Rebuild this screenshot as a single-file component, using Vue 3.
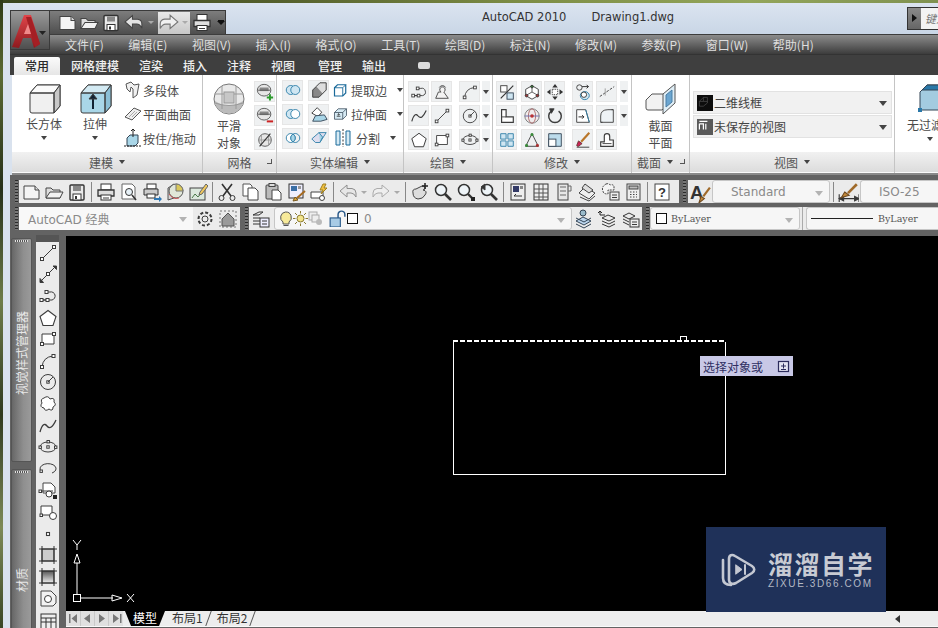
<template>
  <div class="app">
    <div class="win">
      <!-- title bar -->
      <div class="titlebar">
        <div class="appbtn">
          <svg width="40" height="40" viewBox="0 0 40 40">
            <defs>
              <linearGradient id="appbg" x1="0" y1="0" x2="0" y2="1">
                <stop offset="0" stop-color="#9c9c9c" />
                <stop offset="1" stop-color="#4c4c4c" />
              </linearGradient>
              <linearGradient id="appred" x1="0" y1="0" x2="0" y2="1">
                <stop offset="0" stop-color="#e0454a" />
                <stop offset="1" stop-color="#8e1a1e" />
              </linearGradient>
            </defs>
            <rect width="40" height="40" fill="url(#appbg)" />
            <path d="M2 37 L14 5 H21 L30 34 L24 38 L21 28 H13 L9 38Z" fill="url(#appred)" stroke="none" />
            <path d="M16 7 H21 L30 34 L25 37Z" fill="#a51f24" stroke="none" />
            <path d="M14 24 H21 L18 14Z" fill="#f08a8a" stroke="none" />
            <path d="M29 21 H36 L32.5 25Z" fill="#222" stroke="none" />
          </svg>
        </div>
        <div class="qat">
          <Ico name="new" :s="21" /><Ico name="open" :s="21" /><Ico name="save" :s="21" /><Ico name="undo" :s="22" />
          <span class="qdrop"></span>
          <span class="qredo"><Ico name="redo" :s="22" /><span class="qdrop"></span></span>
          <Ico name="print" :s="21" />
          <span class="qmore"></span>
        </div>
        <div class="wintitle"><span>AutoCAD 2010</span><span>Drawing1.dwg</span></div>
        <div class="search"><span class="searcharrow"></span><span class="searchtxt">键入</span></div>
      </div>

      <div class="menubar">
        <span v-for="m in menus" :key="m">{{ m }}</span>
      </div>

      <div class="tabs">
        <span v-for="(t, i) in tabs" :key="t" class="tab" :class="{ on: i === 0 }">{{ t }}</span>
        <span class="tabtoggle"></span>
      </div>

      <!-- ribbon -->
      <div class="ribbon">
        <section class="panel" style="width: 191px">
          <div class="body model">
            <div class="big" style="width: 64px">
              <Ico name="box" :s="34" />
              <span>长方体</span><i class="ar"></i>
            </div>
            <div class="big" style="width: 38px">
              <Ico name="extrude" :s="34" />
              <span>拉伸</span><i class="ar"></i>
            </div>
            <div class="smalls">
              <div v-for="r in modelRows" :key="r[1]" class="srow"><Ico :name="r[0]" :s="20" /><span>{{ r[1] }}</span></div>
            </div>
          </div>
          <div class="ptitle">建模<i class="ar"></i></div>
        </section>

        <section class="panel" style="width: 74px">
          <div class="body mesh">
            <div class="big" style="width: 46px">
              <Ico name="sphere" :s="34" />
              <span class="lbl2">平滑<br />对象</span>
            </div>
            <div class="col">
              <span class="cell"><Ico name="meshadd" /></span>
              <span class="cell"><Ico name="meshsub" /></span>
              <span class="cell"><Ico name="meshno" /></span>
            </div>
          </div>
          <div class="ptitle">网格<em class="corner"></em></div>
        </section>

        <section class="panel" style="width: 127px">
          <div class="body solid">
            <div v-for="r in solidRows" :key="r[3]" class="srow">
              <span class="cell"><Ico :name="r[0]" /></span>
              <span class="cell second"><Ico :name="r[1]" /></span>
              <Ico :name="r[2]" :s="20" />
              <span class="stxt">{{ r[3] }}</span><i class="ar"></i>
            </div>
          </div>
          <div class="ptitle">实体编辑<i class="ar"></i></div>
        </section>

        <section class="panel" style="width: 89px">
          <div class="body gridp draw">
            <template v-for="n in drawCells" :key="n">
              <span v-if="n === 'd'" class="dropcell"><i class="ar"></i></span>
              <span v-else class="cell"><Ico :name="n" /></span>
            </template>
          </div>
          <div class="ptitle">绘图<i class="ar"></i></div>
        </section>

        <section class="panel" style="width: 139px">
          <div class="body gridp modify">
            <template v-for="(n, i) in modifyCells" :key="i">
              <span v-if="n === 'd'" class="dropcell"><i class="ar"></i></span>
              <span v-else-if="n === ''"></span>
              <span v-else class="cell"><Ico :name="n" /></span>
            </template>
          </div>
          <div class="ptitle">修改<i class="ar"></i></div>
        </section>

        <section class="panel" style="width: 58px">
          <div class="body sect">
            <Ico name="section" :s="34" />
            <span class="lbl2">截面<br />平面</span>
          </div>
          <div class="ptitle sectitle">截面<i class="ar"></i><em class="corner"></em></div>
        </section>

        <section class="panel" style="width: 205px">
          <div class="body viewp">
            <div class="vcombo"><b class="sw"><Ico name="wire" :s="16" /></b><span>二维线框</span><i class="ar big-ar"></i></div>
            <div class="vcombo"><b class="sw gray"><Ico name="views" :s="16" /></b><span>未保存的视图</span><i class="ar big-ar"></i></div>
          </div>
          <div class="ptitle">视图<i class="ar"></i></div>
        </section>

        <section class="panel lastp">
          <div class="body nofilter">
            <Ico name="nofilter" :s="34" />
            <span>无过滤器</span><i class="ar"></i>
          </div>
          <div class="ptitle"></div>
        </section>
      </div>

      <!-- toolbars -->
      <div class="toolrow">
        <span class="grip"></span>
        <div class="tb std">
          <template v-for="(n, i) in stdTools" :key="i">
            <span v-if="n === '|'" class="sep"></span>
            <span v-else-if="n === 'd'" class="tdrop"></span>
            <span v-else class="tbtn" :class="{ dim: n === 'undo' || n === 'redo' }"><Ico :name="n" :s="20" /></span>
          </template>
        </div>
        <span class="grip g2"></span>
        <div class="tb rest">
          <span class="tbtn wide"><Ico name="textstyle" :s="22" /></span>
          <div class="combo" style="width: 118px"><span class="ctext">Standard</span><i class="ar cgray"></i></div>
          <span class="sep"></span>
          <span class="tbtn wide"><Ico name="dimstyle" :s="22" /></span>
          <div class="combo grow"><span class="ctext">ISO-25</span></div>
        </div>
      </div>

      <div class="toolrow second">
        <span class="grip"></span>
        <div class="tb wsp">
          <div class="combo flat" style="width: 174px"><span class="ctext wsname">AutoCAD 经典</span><i class="ar cgray"></i></div>
          <span class="tbtn"><Ico name="gear" :s="20" /></span>
          <span class="tbtn"><Ico name="house" :s="20" /></span>
        </div>
        <span class="grip g3"></span>
        <div class="tb layers">
          <span class="tbtn"><Ico name="layerprops" :s="20" /></span>
          <div class="combo layercombo" style="width: 298px">
            <Ico name="bulb" :s="15" /><Ico name="sun" :s="15" /><Ico name="freeze" :s="15" />
            <Ico name="lock" :s="17" class="lockic" />
            <span class="colorsq"></span>
            <span class="ctext zero">0</span>
            <i class="ar cgray"></i>
          </div>
          <span class="tbtn"><Ico name="layera" :s="20" /></span>
          <span class="tbtn"><Ico name="layerb" :s="20" /></span>
          <span class="tbtn"><Ico name="layerc" :s="20" /></span>
        </div>
        <span class="grip g4"></span>
        <div class="tb props">
          <div class="combo" style="width: 150px"><span class="colorsq small"></span><span class="mono">ByLayer</span><i class="ar cgray"></i></div>
          <span class="twoline"></span>
          <div class="combo grow"><span class="ltline"></span><span class="mono">ByLayer</span></div>
        </div>
      </div>

      <!-- work area -->
      <div class="work">
        <div class="palettes">
          <div class="pal p1"><span>视觉样式管理器</span></div>
          <div class="pal p2"><span>材质</span></div>
        </div>
        <div class="vtools">
          <span class="vgrip"></span>
          <span v-for="n in drawTools" :key="n" class="vbtn"><Ico :name="n" :s="20" /></span>
        </div>
        <div class="stage">
          <div class="canvas">
            <div class="rect"></div>
            <div class="rectgrip"></div>
            <div class="tip">
              <span>选择对象或</span>
              <svg width="13" height="13" viewBox="0 0 13 13">
                <rect x="1.5" y="1.5" width="10" height="10" fill="#e4e4f2" stroke="#2c2c5c" stroke-width="1.2" />
                <path d="M4 6h5M6.500 3.500v5M4 9.500h5" stroke="#2c2c5c" fill="none" />
              </svg>
            </div>
            <svg class="ucs" width="70" height="70" viewBox="0 0 70 70">
              <g fill="none" stroke="#fff" stroke-width="1">
                <rect x="4.5" y="55.5" width="7" height="7" />
                <path d="M8 55V24M12 59H44" />
                <path d="M8 15 L5 24 H11Z M43 56 L53 59 L43 62Z" />
                <path d="M4 1 L8 6 L12 1 M8 6 V11" />
                <path d="M58 55 L65 63 M65 55 L58 63" />
              </g>
            </svg>
          </div>
          <div class="tabbar">
            <div class="navs">
              <svg width="56" height="15" viewBox="0 0 56 15" fill="#777">
                <path d="M3 3h1.500v9H3zM11 3v9L5.500 7.500zM24 3v9L18 7.500zM33 3v9l6-4.500zM47 3v9l6-4.500zM54 3h1.500v9H54z" />
                <path d="M14.500 0v15M28.500 0v15M42.500 0v15" stroke="#c9c9c9" />
              </svg>
            </div>
            <span class="ltab active">模型</span>
            <span class="ltab">布局1</span>
            <span class="ltab">布局2</span>
            <span class="scrollleft"></span>
          </div>
        </div>
      </div>
    </div>

    <!-- watermark sits on top of the drawing area -->
    <div class="mark">
      <svg width="38" height="38" viewBox="0 0 38 38" fill="none" stroke="#c4c8d2" stroke-width="2.6" stroke-linecap="round" stroke-linejoin="round">
        <path d="M3 9 V27 C3 32 6 34 11 34" />
        <path d="M9 8 C9 4 12 3 15 5 L32 15 C35 17 35 20 32 22 L16 32 C12 34 9 32 9 29 Z" />
        <path d="M16 14 L22 18.500 L16 23Z" fill="#c4c8d2" stroke-width="1" />
        <path d="M25 14 V23" stroke-width="2" />
      </svg>
      <div class="marktxt">
        <div class="m1">溜溜自学</div>
        <div class="m2">ZIXUE.3D66.COM</div>
      </div>
    </div>
  </div>
</template>

<script setup>
import { h } from "vue";

const menus = ["文件(F)", "编辑(E)", "视图(V)", "插入(I)", "格式(O)", "工具(T)", "绘图(D)", "标注(N)", "修改(M)", "参数(P)", "窗口(W)", "帮助(H)"];
const tabs = ["常用", "网格建模", "渲染", "插入", "注释", "视图", "管理", "输出"];

const modelRows = [
  ["polysolid", "多段体"],
  ["planesurf", "平面曲面"],
  ["presspull", "按住/拖动"],
];
const solidRows = [
  ["union", "shell", "extractedge", "提取边"],
  ["subtract", "imprint", "extrudeface", "拉伸面"],
  ["intersect", "eraser", "split", "分割"],
];
const drawCells = [
  "pline", "hatchp", "arc", "d",
  "spline", "line", "circle", "d",
  "polygon", "rectg", "ellipse", "d",
];
const modifyCells = [
  "scale", "rot3d", "move", "offset", "trim", "d",
  "stretchc", "orbit", "rotate", "stretch", "fillet", "d",
  "array", "align", "scalebox", "brush", "boundary", "",
];
const stdTools = [
  "new", "open", "save", "|", "print", "preview", "plot", "globe", "sheet", "|",
  "cut", "copy", "paste", "match", "blockedit", "|", "undo", "d", "redo", "d", "|",
  "pan", "zoom", "zoomw", "zoomp", "|", "propsp", "design", "tool", "sheets", "markup", "calc", "|", "help",
];
const drawTools = [
  "line", "xline", "pline", "polygon", "rectg", "arc", "circle", "cloud", "spline", "ellipse",
  "earc", "insert", "block", "point", "hatch", "gradient", "region", "table",
];

const box = (front, top, side) =>
  `<path d="M3 11 L10 3 H33 V24 L27 31 H5 Q3 31 3 29Z" fill="${front}"/><path d="M3 11 L10 3 H33 L27 11Z" fill="${top}"/><path d="M27 11 L33 3 V24 L27 31Z" fill="${side}"/><path d="M3 11 H27 V31"/>`;

const ICONS = {
  box: box("#f0f0f0", "#fbfbfb", "#c8c8c8"),
  extrude: box("#a9d6e8", "#d3eaf3", "#8cbfd6") + '<path d="M15 27 V15" stroke="#123" stroke-width="2"/><path d="M11 17 L15 12 L19 17Z" fill="#123"/>',
  sphere: '<circle cx="17" cy="17" r="15" fill="#e9e9e9" stroke="#777"/><path d="M3 19 Q17 28 31 19 V22 A15 15 0 0 1 3 22Z" fill="#bbb" stroke="none"/><path d="M3 12 H31 M10 4 V27 M24 4 V27 M3 21 Q17 26 31 21" stroke="#999"/><rect x="12" y="10" width="10" height="11" fill="#c7c7c7" stroke="#999"/>',
  section: '<path d="M2 18 L8 12 H22 V24 L18 28 H4 Q2 28 2 26Z" fill="#f2f2f2" stroke="#555"/><path d="M19 12 L31 2 V21 L19 32Z" fill="#dfeef6" stroke="#555"/><path d="M22 13 L28 8 V20 L22 25Z" fill="#6aa5d0" stroke="#4a7ea6"/>',
  nofilter: '<path d="M3 10 L10 3 H34 V28 H3Z" fill="#a3cbe0" stroke="#345"/><path d="M3 10 L10 3 H34 L32 8 H5Z" fill="#2a78a8" stroke="#345"/><rect x="1" y="26" width="4" height="4" fill="#2a78a8" stroke="none"/>',

  new: '<path d="M3 4 H14 L18 8 V17 H3Z" fill="#f4f4f4" stroke="#444"/><path d="M14 4 V8 H18" fill="#d9d9d9" stroke="#444"/>',
  open: '<path d="M2 6 H7 L9 8 H16 V16 H2Z" fill="#dedede" stroke="#444"/><path d="M2 16 L6 10 H19 L16 16Z" fill="#f2f2f2" stroke="#444"/>',
  save: '<rect x="3" y="3" width="14" height="15" rx="1" fill="#e9e9e9" stroke="#333" stroke-width="1.4"/><rect x="6" y="4" width="8" height="5" fill="#888" stroke="none"/><rect x="6" y="12" width="8" height="6" fill="#fff" stroke="#333"/><rect x="8" y="14" width="2" height="3" fill="#333" stroke="none"/>',
  undo: '<path d="M2 9 L9 3 V6.500 H14 Q18 7 18 11 V15 Q16 11 13 11 H9 V15Z" fill="#e2e2e2" stroke="#444"/>',
  redo: '<path d="M18 9 L11 3 V6.500 H6 Q2 7 2 11 V15 Q4 11 7 11 H11 V15Z" fill="#f1f1f1" stroke="#777"/>',
  print: '<rect x="5" y="2" width="10" height="6" fill="#fff" stroke="#333"/><path d="M2 8 H18 V14 H2Z" fill="#dedede" stroke="#333" stroke-width="1.3"/><rect x="5" y="13" width="10" height="5" fill="#fff" stroke="#333"/><path d="M7 16 H13" />',
  preview: '<path d="M3 2 H13 L16 5 V17 H3Z" fill="#fff" stroke="#666"/><circle cx="10" cy="10" r="3.5" fill="#e7f1f7" stroke="#333"/><path d="M13 13 L17 18" stroke="#333" stroke-width="1.6"/>',
  plot: '<rect x="5" y="2" width="9" height="5" fill="#fff" stroke="#333"/><path d="M2 7 H16 V13 H2Z" fill="#ccc" stroke="#333"/><rect x="5" y="12" width="8" height="4" fill="#fff" stroke="#333"/><path d="M12 16 H17 V14 L20 17 L17 20 V18 H12Z" fill="#2f78b5" stroke="none"/>',
  globe: '<path d="M3 6 L9 2 L9 16 L3 18Z" fill="#d5d5d5" stroke="#555"/><circle cx="11" cy="9" r="7" fill="#e0e6d8" stroke="#555"/><path d="M11 2 A7 7 0 0 1 18 9 H11Z" fill="#d9c85a" stroke="#777"/><path d="M4 12 Q8 18 14 16" fill="none" stroke="#c55"/>',
  sheet: '<rect x="2" y="6" width="15" height="12" fill="#dce9dd" stroke="#444"/><path d="M4 16 L7 12 L10 15 L14 10" stroke="#4a7a4a"/><path d="M12 10 L18 2 L20 4 L14 12 L11 13Z" fill="#f1c95c" stroke="#666"/>',
  cut: '<path d="M5 2 L14 14 M15 2 L6 14" stroke="#333" stroke-width="1.6"/><circle cx="4.5" cy="16" r="2.5"/><circle cx="15.5" cy="16" r="2.5"/>',
  copy: '<path d="M3 2 H10 L12 4 V14 H3Z" fill="#fff" stroke="#555"/><path d="M8 6 H15 L18 9 V18 H8Z" fill="#fff" stroke="#444"/>',
  paste: '<rect x="3" y="3" width="12" height="14" rx="1" fill="#bbb" stroke="#444"/><rect x="6" y="1.5" width="6" height="3" fill="#ddd" stroke="#444"/><path d="M9 8 H15 L18 11 V18 H9Z" fill="#fff" stroke="#444"/>',
  match: '<rect x="3" y="2" width="14" height="14" fill="#eef" stroke="#333"/><rect x="5" y="4" width="6" height="5" fill="#3a6ea5" stroke="none"/><rect x="12" y="4" width="3" height="3" fill="#999" stroke="none"/><path d="M19 9 L11 16" stroke="#a56a20" stroke-width="2"/><path d="M9 15 L12 18 L7 19Z" fill="#d8a23a" stroke="#7a5a20"/>',
  blockedit: '<path d="M2 10 H14 V16 H2Z" fill="#fff" stroke="#444"/><circle cx="13" cy="16" r="2.5" fill="#fff" stroke="#444"/><path d="M14 2 L11 8 H14 L12 12 L18 6 H15 L17 2Z" fill="#f0c040" stroke="#a08020"/>',
  pan: '<path d="M3 11 Q2 7 6 7 L12 4 Q16 4 15 7 L13 8 Q18 9 15 13 Q13 17 8 17 Q3 16 3 11Z" fill="#ddd" stroke="#444"/><path d="M15 1 V7 M12 4 H18" stroke="#222" stroke-width="1.5"/>',
  zoom: '<circle cx="8" cy="8" r="5.5" fill="#eef4f8" stroke="#333" stroke-width="1.5"/><path d="M12 12 L18 18" stroke="#333" stroke-width="2.6"/>',
  zoomw: '<circle cx="8" cy="8" r="5.5" fill="#eef4f8" stroke="#333" stroke-width="1.5"/><path d="M12 12 L16 16" stroke="#333" stroke-width="2.4"/><rect x="15" y="15" width="4" height="4" fill="#222" stroke="none"/>',
  zoomp: '<circle cx="8" cy="8" r="5.5" fill="#eef4f8" stroke="#333" stroke-width="1.5"/><path d="M12 12 L18 18" stroke="#333" stroke-width="2.6"/><path d="M2 5 L6 2 V8Z" fill="#333"/>',
  propsp: '<rect x="3" y="2" width="14" height="16" fill="#eee" stroke="#333"/><rect x="5" y="4" width="6" height="6" fill="#333a66" stroke="none"/><rect x="12" y="4" width="3" height="3" fill="#888" stroke="none"/><path d="M6 14 H14 M6 14 L8 12" stroke="#333"/>',
  design: '<rect x="3" y="2" width="14" height="16" fill="#eee" stroke="#333"/><path d="M3 7 H17 M3 11 H17 M3 15 H17 M8 2 V18 M12 2 V18" stroke="#555"/>',
  tool: '<rect x="4" y="2" width="10" height="16" fill="#e6e6e6" stroke="#444"/><path d="M14 4 H17 V9 H14 M6 5 H12 M6 9 H12 M6 13 H12" stroke="#666"/>',
  sheets: '<path d="M2 11 L8 5 L18 11 L12 17Z" fill="#eee" stroke="#444"/><path d="M8 2 L16 8 L12 11 L5 6Z" fill="#ddd" stroke="#444"/><path d="M3 15 L12 19 L18 14" stroke="#444"/>',
  markup: '<path d="M6 2 Q9 1 10 3 Q14 2 14 5 V8 H8 V12 Q3 12 3 9 Q1 5 6 2Z" fill="#f4f4f4" stroke="#444" stroke-dasharray="2 1"/><rect x="10" y="10" width="9" height="8" fill="#eee" stroke="#444"/><path d="M12 13 H17 M12 15.500 H17"/>',
  calc: '<rect x="4" y="2" width="13" height="16" fill="#eee" stroke="#444"/><rect x="6" y="4" width="9" height="3" fill="#bbb" stroke="#444"/><path d="M7 10 H14 M7 12.500 H14 M7 15 H14" stroke="#444" stroke-dasharray="1.5 1.5"/>',
  help: '<rect x="3" y="2" width="14" height="16" fill="#fff" stroke="#444"/><text x="10" y="15" font-size="13" font-weight="700" text-anchor="middle" font-family="Liberation Sans" fill="#333" stroke="none">?</text>',

  textstyle: '<text x="1" y="16" font-size="17" font-family="Liberation Sans" font-weight="700" fill="#333" stroke="none">A</text><path d="M19 6 L13 14" stroke="#a06a2a" stroke-width="2"/><path d="M11 14 L14 16 L9 20Z" fill="#c58a3a" stroke="#704a20"/>',
  dimstyle: '<path d="M2 12 V19 M20 12 V19 M2 16 H20" stroke="#333"/><path d="M2 16 L6 14 V18Z M20 16 L16 14 V18Z" fill="#333"/><path d="M18 3 L10 11" stroke="#a06a2a" stroke-width="2.4"/><path d="M7 10 L11 13 L4 15Z" fill="#c58a3a" stroke="#704a20"/>',
  gear: '<circle cx="10" cy="10" r="3" /><circle cx="10" cy="10" r="6.5" stroke-dasharray="3 2" stroke-width="2" />',
  house: '<path d="M2 2 H18 V18 H2Z" stroke-dasharray="2 2" stroke="#777"/><path d="M4 10 L10 4 L16 10 V17 H4Z" fill="#9a9a9a" stroke="#555"/>',
  layerprops: '<path d="M2 6 L8 3 H12 L8 6Z M2 9 H9 M2 12 H9 M2 15 H9" stroke="#333"/><rect x="9" y="9" width="9" height="9" fill="#eef" stroke="#333"/><path d="M11 12 H16 M11 15 H16" stroke="#333"/>',
  bulb: '<path d="M7.500 1 A5.500 5.500 0 0 1 11 11 V13 H5 V11 A5.500 5.500 0 0 1 7.500 1Z" fill="#f7ea9a" stroke="#555"/><path d="M5.500 14.500 H10.500" stroke="#555"/>',
  sun: '<circle cx="7.5" cy="7.5" r="3.5" fill="#f3e48a" stroke="#8a7a30"/><path d="M7.500 0 V2.500 M7.500 12.500 V15 M0 7.500 H2.500 M12.500 7.500 H15 M2 2 L4 4 M11 11 L13 13 M13 2 L11 4 M4 11 L2 13" stroke="#8a7a30"/>',
  freeze: '<rect x="1" y="1" width="8" height="8" fill="#eee" stroke="#aaa"/><rect x="4" y="4" width="7" height="7" fill="#eee" stroke="#aaa"/><circle cx="11" cy="11" r="3" fill="#bbb" stroke="none"/>',
  lock: '<rect x="1" y="7" width="9" height="8" fill="#a8cbe5" stroke="#2a5a8a"/><path d="M8 7 V4 A3 3 0 0 1 14 4 V6" stroke="#2a5a8a" stroke-width="1.3"/>',
  layera: '<path d="M2 12 L9 8 L17 12 L10 16Z" fill="#bcd6ee" stroke="#345"/><path d="M2 15 L10 19 L17 15 M2 9 L10 13 L17 9" stroke="#345"/><circle cx="9" cy="4" r="3" fill="#9bc" stroke="#345"/>',
  layerb: '<path d="M5 9 L11 6 L18 9 L12 12Z M5 12 L12 15 L18 12 M5 15 L12 18 L18 15" stroke="#333"/><path d="M3 6 V2 M1 4 L3 2 L5 4 M3 6 H8" stroke="#222"/>',
  layerc: '<path d="M3 7 L9 4 L15 7 L9 10Z M3 10 L9 13 M3 13 L9 16" stroke="#333"/><rect x="10" y="10" width="9" height="8" fill="#eee" stroke="#333"/><path d="M12 13 H17 M12 15.500 H17"/>',
  wire: '<path d="M3 8 L8 3 H13 V10 L8 14 H3Z M8 3 V8 H13 M3 8 H8" stroke="#555" stroke-width=".8"/>',
  views: '<path d="M3 3 H13 M3 6 H8 V13 M11 6 V13 M3 6 V13" stroke="#fff" stroke-width="1.5"/>',

  polysolid: '<path d="M3 4 L8 2 L11 5 L16 4 L14 15 L10 18 L10 9 L8 7 L7 12 L4 9Z" fill="#f0f0f0" stroke="#555"/>',
  planesurf: '<path d="M2 13 L11 4 L18 7 L9 16Z" fill="#eee" stroke="#555"/><path d="M6 13 L12 7 M9 13 L14 8" stroke="#aaa"/>',
  presspull: '<path d="M4 10 L7 7 H15 V15 L12 18 H4Z" fill="#a9d6e8" stroke="#345"/><path d="M10 9 V1 M8 3 L10 1 L12 3" stroke="#222"/><path d="M1 18 H18" stroke="#222" stroke-dasharray="2 1"/>',
  meshadd: '<ellipse cx="9" cy="8" rx="7.5" ry="6.5" fill="#e6e6e6" stroke="#555"/><rect x="4" y="5" width="10" height="4" fill="#888" stroke="none"/><path d="M2 8 H16" stroke="#555"/><path d="M12 16 H19 M15.500 12.500 V19.500" stroke="#2c9a2c" stroke-width="2.2"/>',
  meshsub: '<ellipse cx="9" cy="8" rx="7.5" ry="6.5" fill="#e6e6e6" stroke="#555"/><rect x="4" y="5" width="10" height="4" fill="#888" stroke="none"/><path d="M2 8 H16" stroke="#555"/><path d="M12 16 H19" stroke="#c22" stroke-width="2.2"/>',
  meshno: '<circle cx="10" cy="10" r="7" fill="#e6e6e6" stroke="#555"/><path d="M3 10 H17 M6 4 V16 M14 4 V16" stroke="#999"/><path d="M4 17 L16 3" stroke="#333" stroke-width="1.2"/>',
  union: '<circle cx="7.5" cy="10" r="5" fill="#cfe6f2" stroke="#2f7fa8"/><circle cx="12.5" cy="10" r="5" fill="#cfe6f2" stroke="#2f7fa8"/>',
  subtract: '<circle cx="7.5" cy="10" r="5" fill="#cfe6f2" stroke="#2f7fa8"/><circle cx="12.5" cy="10" r="5" fill="#fff" stroke="#2f7fa8"/>',
  intersect: '<circle cx="7.5" cy="10" r="5" fill="#fff" stroke="#2f7fa8"/><circle cx="12.5" cy="10" r="5" fill="none" stroke="#2f7fa8"/><path d="M10 5.700 A5 5 0 0 1 10 14.300 A5 5 0 0 1 10 5.700Z" fill="#a9d6e8" stroke="#2f7fa8"/>',
  shell: '<path d="M3 10 L7 6 H14 V14 L10 18 H3Z" fill="#888" stroke="#333"/><path d="M7 6 L11 2 H18 V10 L14 14" fill="#ddd" stroke="#333"/>',
  imprint: '<path d="M2 9 L8 3 L13 8 L9 13Z" fill="#fff" stroke="#333"/><path d="M3 18 L6 12 L16 11 L19 16 L12 18Z" fill="#a9d6e8" stroke="#345"/>',
  eraser: '<path d="M2 11 L10 4 H18 L11 15 H6Z" fill="#dde" stroke="#2f7fa8"/><path d="M10 4 L14 9 L11 15" fill="#a9d6e8" stroke="#2f7fa8"/>',
  extractedge: '<path d="M2 7 L6 3 H17 V14 L13 18 H2Z" fill="#fff" stroke="#1a6a9a" stroke-width="1.6"/><path d="M2 7 H13 V18 M13 7 L17 3" stroke="#1a6a9a" stroke-width="1.2"/>',
  extrudeface: '<path d="M2 8 L7 3 H18 V12 L13 17 H2Z" fill="#d6eaf4" stroke="#345"/><path d="M2 8 H13 V17 M13 8 L18 3" stroke="#345"/><path d="M5 13 H10 M7.500 10 V12 M6 11 L7.500 9.500 L9 11" stroke="#222"/>',
  split: '<path d="M3 3 H7 V17 H3Z M13 3 H17 V17 H13Z" fill="#d6eaf4" stroke="#1a6a9a"/><path d="M10 1 V19" stroke="#333" stroke-dasharray="2 1.5"/>',
  pline: '<path d="M3 14 H9 M3 14 H9 M10 14 H14 A4 4 0 0 0 12 6 H9" /><rect x="2" y="12.5" width="3" height="3" fill="#fff"/><rect x="8" y="12.5" width="3" height="3" fill="#fff"/><rect x="7" y="4.5" width="3" height="3" fill="#fff"/>',
  hatchp: '<path d="M3 17 L6 10 H9 A3 3 0 1 1 12 10 L17 17Z" fill="#f3f3f3" stroke="#444"/><path d="M7 5 A4 4 0 0 1 14 5" />',
  arc: '<path d="M4 16 Q5 6 15 5" /><rect x="2.5" y="14.5" width="3" height="3" fill="#fff"/><rect x="14" y="3.5" width="3" height="3" fill="#fff"/>',
  spline: '<path d="M2 16 Q5 5 9 10 T18 4" stroke-width="1.3"/>',
  line: '<path d="M4 16 L16 4" /><rect x="2.5" y="14.5" width="3" height="3" fill="#fff"/><rect x="14.5" y="2.5" width="3" height="3" fill="#fff"/>',
  xline: '<path d="M2 18 L18 2" /><rect x="8.5" y="8.5" width="3" height="3" fill="#fff"/><path d="M15 2 H18.500 V5.500Z M2 14.500 V18.500 H5.500Z" fill="#333"/>',
  circle: '<circle cx="10" cy="10" r="7.5"/><rect x="8.8" y="8.8" width="2.4" height="2.4" fill="#fff"/><path d="M10 10 L15 5" />',
  polygon: '<path d="M10 2.500 L18 8.500 L15 17.500 H5 L2 8.500Z" fill="#fff" stroke-width="1.1"/>',
  rectg: '<path d="M4 5 H16 V15 H4Z" fill="#fff"/><rect x="2.5" y="13.5" width="3" height="3" fill="#fff"/><rect x="14.5" y="3.5" width="3" height="3" fill="#fff"/>',
  ellipse: '<ellipse cx="10" cy="10" rx="8" ry="5"/><rect x="8.8" y="8.8" width="2.4" height="2.4" fill="#fff"/><rect x="9" y="3.5" width="2.4" height="2.4" fill="#fff"/><rect x="1" y="9" width="2.4" height="2.4" fill="#fff"/><rect x="16.5" y="9" width="2.4" height="2.4" fill="#fff"/>',
  earc: '<path d="M3 12 A8 5 0 1 1 14 14" /><rect x="2" y="11" width="2.4" height="2.4" fill="#fff"/>',
  cloud: '<path d="M6 4 Q10 1 12 5 Q17 3 16 8 Q19 11 15 13 Q15 18 11 15 Q7 18 6 14 Q1 13 4 9 Q2 5 6 4Z" fill="#fff"/>',
  insert: '<path d="M5 3 H13 L17 7 V13 H5Z" fill="#fff" stroke="#444"/><path d="M2 11 H15" /><rect x="1" y="10" width="2.5" height="2.5" fill="#fff"/><circle cx="11" cy="14" r="3" fill="#fff"/><rect x="15" y="15" width="4" height="4" fill="#222" stroke="none"/>',
  block: '<path d="M3 4 H14 V13 H3Z" fill="#fff"/><rect x="2" y="12" width="2.5" height="2.5" fill="#fff"/><circle cx="15" cy="14" r="3.5" fill="#fff"/>',
  point: '<rect x="8.5" y="8.5" width="3" height="3" fill="#fff" stroke-width="1.1"/>',
  hatch: '<rect x="4" y="4" width="12" height="12" fill="#ccc" stroke="#333"/><path d="M1 4 H19 M1 16 H19 M4 1 V19 M16 1 V19" stroke="#333"/>',
  gradient: '<defs><linearGradient id="gr" x1="0" y1="0" x2="0" y2="1"><stop offset="0" stop-color="#555"/><stop offset="1" stop-color="#eee"/></linearGradient></defs><rect x="4" y="4" width="12" height="12" fill="url(#gr)" stroke="#333"/><path d="M1 4 H19 M1 16 H19 M4 1 V19 M16 1 V19" stroke="#333"/>',
  region: '<path d="M3 3 H13 L18 8 V15 L15 18 H3Z" fill="#f2f2f2" stroke="#444"/><circle cx="10" cy="11" r="3.5" fill="#fff"/>',
  table: '<rect x="3" y="4" width="15" height="15" fill="#eee" stroke="#333"/><path d="M3 8 H18 M3 12 H18 M8 8 V19 M13 8 V19" stroke="#333"/>',
  scale: '<path d="M3 17 L17 3" stroke="#333" stroke-width="1.3"/><rect x="3" y="3" width="7" height="7" fill="#fff"/><rect x="10" y="11" width="7" height="7" fill="#cfe6f2" stroke="#345"/>',
  rot3d: '<path d="M10 3 L17 7 V14 L10 18 L3 14 V7Z" fill="#fff"/><path d="M10 10 V3 M10 10 L3 14 M10 10 L17 14" stroke="#555"/><circle cx="10" cy="4" r="1.5" fill="#3a7a3a"/><circle cx="4" cy="14" r="1.5" fill="#a33"/><circle cx="16" cy="14" r="1.5" fill="#a33"/>',
  move: '<path d="M10 1 L13 5 H7Z M10 19 L7 15 H13Z M1 10 L5 7 V13Z M19 10 L15 7 V13Z" fill="#333" stroke="none"/><rect x="7" y="7" width="6" height="6" fill="#fff" stroke-dasharray="1.5 1"/>',
  offset: '<circle cx="6" cy="5" r="3"/><path d="M9 4 H16 M14 2 L16 4 L14 6" stroke="#222"/><ellipse cx="12" cy="14" rx="5" ry="4.5" stroke="#2f7fa8" fill="#cfe6f2"/><ellipse cx="11" cy="13" rx="3" ry="3" fill="#fff" stroke="#333"/>',
  trim: '<path d="M2 15 L18 4" stroke-dasharray="3 1.5"/><path d="M8 6 V14" stroke="#999"/>',
  stretchc: '<path d="M4 3 H9 V11 H17 V17 H4Z" fill="#fff" stroke-width="1.3"/><path d="M4 11 H9" />',
  orbit: '<circle cx="10" cy="10" r="8" fill="#f0ecec" stroke="#777"/><ellipse cx="10" cy="10" rx="4" ry="8" stroke="#a66"/><path d="M2 10 H18" stroke="#66a"/><circle cx="10" cy="10" r="2" fill="#b33" stroke="none"/>',
  rotate: '<path d="M14 4.500 A7 7 0 1 1 6 4.500" stroke-width="1.6"/><path d="M4 2 L9 2 L6 7Z" fill="#333"/>',
  stretch: '<path d="M3 3 H13 L17 17 H3Z" fill="#fff"/><path d="M13 3 L17 17" stroke="#2f7fa8"/><path d="M5 11 H11 M9 9 L11 11 L9 13" stroke="#222"/>',
  fillet: '<path d="M3 17 V10 Q3 3 11 3 H17 V17Z" fill="#eef3f6"/><path d="M3 17 H5 M15 3 H17" />',
  array: '<path d="M3 3 H9 V9 H3Z M11 3 H17 V9 H11Z M3 11 H9 V17 H3Z M11 11 H17 V17 H11Z" fill="#cfe6f2" stroke="#2f7fa8"/>',
  align: '<path d="M10 3 L3 17 H17Z"/><circle cx="10" cy="4" r="1.7" fill="#3a8a3a" stroke="none"/><circle cx="4" cy="16" r="1.7" fill="#3a8a3a" stroke="none"/><circle cx="16" cy="16" r="1.7" fill="#a33" stroke="none"/>',
  scalebox: '<path d="M3 3 H17 V17 H3Z" fill="#bcdcec" stroke="#345"/><rect x="3" y="9" width="8" height="8" fill="#fff" stroke="#345"/>',
  brush: '<path d="M17 2 L8 12" stroke="#b9762a" stroke-width="2.4"/><path d="M5 11 L9 14 L5 17 Q3 17 3 16Z" fill="#c25" stroke="#633"/><path d="M3 18 H17" stroke="#333"/>',
  boundary: '<path d="M3 17 V12 H7 V6 Q7 3 10 3 Q13 3 13 6 V10 H17 V17Z" fill="#fff" stroke-width="1.3"/><path d="M5 14 H15" />',
};

const Ico = (props) =>
  h("svg", {
    class: "ico",
    width: props.s || 18,
    height: props.s || 18,
    viewBox: (props.s || 18) >= 30 ? "0 0 34 34" : ["bulb", "sun", "freeze", "lock"].includes(props.name) ? "0 0 15 15" : "0 0 20 20",
    fill: "none",
    stroke: "#3c3c3c",
    innerHTML: ICONS[props.name] || "",
  });
Ico.props = ["name", "s"];
</script>

<style scoped>
.app {
  position: relative;
  width: 938px;
  height: 628px;
  overflow: hidden;
  padding: 3px 0 0 3px;
  box-sizing: border-box;
  background: linear-gradient(90deg, #39451f 0, #55602c 30%, #7c8c44 55%, #93a55a 80%, #7f9150 100%);
  font-family: "Noto Sans CJK SC", "Liberation Sans", sans-serif;
  font-size: 12px;
  color: #4a4a4a;
}
.app::before {
  content: "";
  position: absolute;
  left: 0;
  top: 0;
  width: 3px;
  height: 628px;
  background: linear-gradient(180deg, #2e3a18, #5b6a34 12%, #26301a 30%, #6d7c4a 48%, #2f3a20 66%, #7d8a58 84%, #3a4626);
}
.win {
  height: 625px;
  padding-left: 7px;
  background: #d9e2ee;
  position: relative;
  display: flex;
  flex-direction: column;
}

.titlebar {
  height: 31px;
  flex: none;
  display: flex;
  align-items: flex-start;
  background: linear-gradient(180deg, #dbe4f0, #c9d6e6);
}
.appbtn {
  position: absolute;
  left: 7px;
  top: 7px;
  width: 40px;
  height: 40px;
  border: 1px solid #3a3a3a;
  box-sizing: border-box;
  overflow: hidden;
  z-index: 2;
}
.appbtn svg {
  display: block;
  margin: -1px;
}
.qat {
  margin-top: 7px;
  width: 216px;
  height: 24px;
  box-sizing: border-box;
  padding-left: 46px;
  display: flex;
  align-items: center;
  gap: 2px;
  background: linear-gradient(180deg, #7d7d7d, #4e4e4e);
  border: 1px solid #3a3a3a;
  border-bottom: 0;
  flex: none;
}
.qdrop {
  width: 0;
  height: 0;
  margin: 0 2px;
  border: 3px solid transparent;
  border-top: 3px solid #aaa;
  border-bottom: 0;
}
.qredo {
  display: flex;
  align-items: center;
  height: 22px;
  width: 32px;
  background: linear-gradient(180deg, #e8e8e8, #c7c7c7);
}
.qmore {
  width: 0;
  height: 0;
  margin-left: 3px;
  border: 4px solid transparent;
  border-top: 4px solid #111;
  border-bottom: 0;
  box-shadow: 0 -2px 0 -1px #111;
}
.wintitle {
  margin-left: 256px;
  margin-top: 7px;
  display: flex;
  gap: 25px;
  font-family: "DejaVu Sans", sans-serif;
  font-size: 11.5px;
  line-height: 14px;
  color: #333;
  width: 425px;
  flex: none;
}
.search {
  margin-top: 4px;
  height: 23px;
  flex: 1;
  display: flex;
  box-sizing: border-box;
  border: 1px solid #333;
  border-right: 0;
  background: #f3f3f3;
}
.searcharrow {
  width: 13px;
  background: linear-gradient(180deg, #8a8a8a, #666);
  position: relative;
}
.searcharrow::after {
  content: "";
  position: absolute;
  left: 4px;
  top: 6px;
  border: 4px solid transparent;
  border-left: 5px solid #111;
  border-right: 0;
}
.searchtxt {
  padding-left: 4px;
  font-style: italic;
  font-size: 11px;
  line-height: 20px;
  color: #777;
  white-space: nowrap;
}

.menubar {
  height: 21px;
  flex: none;
  box-sizing: border-box;
  border-top: 1px solid #3d3d3d;
  border-bottom: 1px solid #333;
  display: flex;
  gap: 24.5px;
  padding-left: 55px;
  align-items: center;
  background: linear-gradient(180deg, #8c8c8c, #3c3c3c);
  color: #dedede;
  font-size: 12px;
}
.tabs {
  height: 20px;
  flex: none;
  display: flex;
  align-items: flex-end;
  padding-left: 4px;
  background: #3f3f3f;
  gap: 20px;
  color: #f0f0f0;
  font-weight: 500;
}
.tab {
  height: 18px;
  line-height: 17px;
  text-align: center;
  flex: none;
}
.tab.on {
  background: linear-gradient(180deg, #fbfbfb, #e6e6e6);
  color: #2a2a2a;
  width: 46px;
  margin-right: -9px;
  border-radius: 2px 2px 0 0;
}
.tab:nth-child(7) {
  margin-left: 3px;
}
.tabtoggle {
  width: 12px;
  height: 7px;
  margin: 0 0 6px 12px;
  background: #ddd;
  border-radius: 2px;
}

.ribbon {
  height: 100px;
  flex: none;
  display: flex;
  margin-left: 2px;
  background: #fff;
  border-bottom: 2px solid #8a8a8a;
  box-sizing: border-box;
  overflow: hidden;
}
.panel {
  flex: none;
  display: flex;
  flex-direction: column;
  box-sizing: border-box;
  border-right: 1px solid #c4c4c4;
}
.lastp {
  flex: 1;
  border-right: 0;
}
.body {
  flex: 1;
  min-height: 0;
  display: flex;
}
.ptitle {
  height: 20px;
  flex: none;
  position: relative;
  display: flex;
  align-items: center;
  justify-content: center;
  gap: 6px;
  background: linear-gradient(180deg, #f1f1f1, #dcdcdc);
  border-bottom: 1px solid #fafafa;
  font-size: 12px;
  color: #555;
}
.ar {
  display: inline-block;
  flex: none;
  width: 0;
  height: 0;
  border: 3px solid transparent;
  border-top: 4px solid #444;
  border-bottom: 0;
}
.corner {
  position: absolute;
  right: 4px;
  top: 7px;
  width: 4px;
  height: 4px;
  border-right: 1px solid #555;
  border-bottom: 1px solid #555;
}
.big {
  display: flex;
  flex-direction: column;
  align-items: center;
  flex: none;
  padding-top: 7px;
  line-height: 16px;
}
.big .ar {
  margin-top: 4px;
}
.lbl2 {
  line-height: 17px;
  text-align: center;
  margin-top: 1px;
}
.smalls {
  padding: 3px 0 0 17px;
}
.srow {
  display: flex;
  align-items: center;
  height: 24px;
  white-space: nowrap;
}
.smalls .srow {
  margin-left: -8px;
}
.mesh {
  padding-left: 3px;
}
.col {
  display: flex;
  flex-direction: column;
  gap: 3px;
  padding: 6px 0 0 2px;
}
.cell {
  width: 21px;
  height: 21px;
  box-sizing: border-box;
  display: flex;
  align-items: center;
  justify-content: center;
  background: #eff1f2;
  border: 1px solid #e6e6e6;
  flex: none;
}
.solid {
  flex-direction: column;
  padding: 3px 0 0 5px;
}
.solid .srow {
  gap: 4px;
}
.cell.second {
  margin-left: 1px;
}
.stxt {
  margin-left: -1px;
}
.solid .ar {
  margin-left: 6px;
}
.gridp {
  display: grid;
  align-content: start;
  padding: 6px 0 0 4px;
  row-gap: 3px;
}
.draw {
  grid-template-columns: 23px 28px 23px 8px;
}
.modify {
  grid-template-columns: 25px 23px 28px 24px 24px 8px;
  padding-left: 3px;
}
.dropcell {
  display: flex;
  align-items: center;
  justify-content: center;
  background: #eff1f2;
  height: 21px;
}
.sect {
  flex-direction: column;
  align-items: center;
  padding-top: 7px;
}
.sectitle {
  justify-content: flex-start;
  padding-left: 5px;
}
.viewp {
  flex-direction: column;
  padding: 16px 2px 0 3px;
  gap: 1px;
}
.vcombo {
  height: 23px;
  box-sizing: border-box;
  display: flex;
  align-items: center;
  gap: 1px;
  padding-left: 3px;
  background: #f1f1f1;
  border: 1px solid #e2e2e2;
  position: relative;
  color: #444;
}
.sw {
  width: 16px;
  height: 16px;
  background: #0d0d0d;
  display: block;
  flex: none;
}
.sw.gray {
  background: #5a5a5a;
}
.big-ar {
  position: absolute;
  right: 4px;
  top: 9px;
  border-width: 4px;
  border-top-width: 5px;
  border-bottom: 0;
}
.nofilter {
  flex-direction: column;
  padding: 7px 0 0 22px;
  align-items: flex-start;
  white-space: nowrap;
}
.nofilter span {
  margin: 0 0 0 -10px;
}
.nofilter .ar {
  margin: 4px 0 0 10px;
}

.toolrow {
  height: 28px;
  flex: none;
  display: flex;
  padding: 5px 0 0 3px;
  box-sizing: border-box;
  background: #636363;
}
.toolrow.second {
  height: 32px;
  padding-top: 4px;
  padding-bottom: 4px;
}
.grip {
  width: 6px;
  height: 23px;
  flex: none;
  background: repeating-linear-gradient(180deg, #2a2a2a 0 1px, #777 1px 3px);
  background-size: 3px 100%;
  background-repeat: no-repeat;
  background-position: center;
}
.tb {
  height: 23px;
  display: flex;
  align-items: center;
  background: #ebebeb;
  flex: none;
}
.std {
  width: 660px;
}
.g2 {
  margin-left: 2px;
}
.rest {
  flex: 1;
  margin-left: 1px;
}
.tbtn {
  width: 23px;
  height: 22px;
  flex: none;
  display: flex;
  align-items: center;
  justify-content: center;
}
.tbtn.dim {
  opacity: 0.55;
}
.tbtn.wide {
  width: 24px;
}
.tdrop {
  width: 10px;
  height: 22px;
  flex: none;
  position: relative;
}
.tdrop::after {
  content: "";
  position: absolute;
  left: 2px;
  top: 10px;
  border: 3px solid transparent;
  border-top: 3px solid #aaa;
  border-bottom: 0;
}
.sep {
  width: 6px;
  height: 20px;
  flex: none;
  background: linear-gradient(#888, #888) center / 1px 100% no-repeat;
}
.combo {
  height: 23px;
  flex: none;
  box-sizing: border-box;
  display: flex;
  align-items: center;
  position: relative;
  padding-left: 3px;
  background: #f6f6f6;
  border: 1px solid #c6c6c6;
  border-radius: 3px;
  white-space: nowrap;
}
.combo.flat {
  border: 0;
  border-radius: 0;
  background: #f8f8f8;
}
.combo.grow {
  flex: 1;
  border-right: 0;
  border-radius: 3px 0 0 3px;
}
.layercombo {
  margin-left: 2px;
}
.ctext {
  font-family: "DejaVu Sans", "Noto Sans CJK SC", sans-serif;
  font-size: 12px;
  color: #8a8a8a;
  padding-left: 15px;
}
.grow .ctext {
  padding-left: 15px;
}
.wsname {
  padding-left: 6px;
}
.cgray {
  position: absolute;
  right: 6px;
  top: 10px;
  border-width: 4px;
  border-top: 5px solid #b3b3b3;
  border-bottom: 0;
}
.wsp {
  width: 221px;
}
.g3 {
  margin-left: 3px;
}
.layers {
  width: 393px;
}
.lockic {
  margin-left: 6px;
}
.colorsq {
  width: 9px;
  height: 9px;
  border: 1px solid #111;
  background: #fff;
  flex: none;
  margin-left: 1px;
}
.colorsq.small {
  margin-left: 2px;
  margin-right: 4px;
}
.ctext.zero {
  padding-left: 6px;
}
.g4 {
  margin-left: 2px;
}
.props {
  flex: 1;
}
.mono {
  font-family: "DejaVu Serif", serif;
  font-size: 9.5px;
  color: #555;
}
.twoline {
  width: 6px;
  height: 23px;
  flex: none;
  background: linear-gradient(90deg, #ebebeb 2px, #aaa 2px, #aaa 3px, #ebebeb 3px);
}
.ltline {
  width: 62px;
  height: 1px;
  margin: 0 5px 0 1px;
  background: #222;
}

.work {
  flex: 1;
  display: flex;
  min-height: 0;
  background: #636363;
  overflow: hidden;
}
.palettes {
  width: 26px;
  flex: none;
  display: flex;
  flex-direction: column;
  gap: 7px;
  padding: 3px 0 0 1px;
  box-sizing: border-box;
}
.pal {
  width: 21px;
  flex: none;
  box-sizing: border-box;
  display: flex;
  align-items: center;
  justify-content: center;
  position: relative;
  background: linear-gradient(90deg, #676767, #8f8f8f 60%, #9a9a9a);
  border: 1px solid #555;
  border-radius: 2px;
  color: #e8e8e8;
  font-size: 12px;
}
.pal::before {
  content: "";
  position: absolute;
  left: 3px;
  right: 3px;
  top: 1px;
  height: 2px;
  background: repeating-linear-gradient(90deg, #e0e0e0 0 1px, #555 1px 2px);
}
.pal span {
  writing-mode: vertical-rl;
  text-orientation: sideways;
  transform: rotate(180deg);
}
.p1 {
  height: 224px;
  padding-top: 6px;
}
.p2 {
  height: 170px;
  padding-top: 52px;
}
.vtools {
  width: 23px;
  flex: none;
  background: #ebebeb;
  display: flex;
  flex-direction: column;
  align-items: center;
}
.vgrip {
  width: 100%;
  height: 7px;
  flex: none;
  background: #555;
}
.vbtn {
  height: 21.6px;
  flex: none;
  display: flex;
  align-items: center;
}
.stage {
  flex: 1;
  display: flex;
  flex-direction: column;
  margin-left: 7px;
  min-width: 0;
}
.canvas {
  height: 375px;
  flex: none;
  position: relative;
  background: #000;
  margin-top: 1px;
  overflow: hidden;
}
.rect {
  position: absolute;
  left: 387px;
  top: 104px;
  width: 273px;
  height: 135px;
  box-sizing: border-box;
  border: 1px solid #fff;
  border-top: 0;
}
.rect::before {
  content: "";
  position: absolute;
  left: -1px;
  right: -1px;
  top: 0;
  height: 2px;
  background: repeating-linear-gradient(90deg, #fff 0 5px, #000 5px 7px);
}
.rectgrip {
  position: absolute;
  left: 614px;
  top: 100px;
  width: 7px;
  height: 5px;
  box-sizing: border-box;
  border: 1px solid #fff;
  border-bottom: 0;
}
.tip {
  position: absolute;
  left: 634px;
  top: 120px;
  width: 93px;
  height: 20px;
  box-sizing: border-box;
  padding: 0 3px;
  display: flex;
  align-items: center;
  justify-content: space-between;
  background: #c8c8e6;
  color: #2f2f62;
  font-size: 12px;
}
.tip svg {
  display: block;
}
.ucs {
  position: absolute;
  left: 3px;
  top: 303px;
  overflow: visible;
}
.tabbar {
  height: 15px;
  flex: none;
  display: flex;
  align-items: center;
  background: #ededed;
  border-bottom: 1px solid #fafafa;
  font-size: 12px;
  color: #333;
  position: relative;
}
.navs {
  width: 57px;
  height: 15px;
  flex: none;
  background: #e0e0e0;
}
.navs svg {
  display: block;
}
.ltab {
  height: 15px;
  line-height: 14px;
  flex: none;
  padding: 0 7px;
  position: relative;
}
.ltab::after {
  content: "";
  position: absolute;
  right: 1px;
  top: 0;
  width: 1px;
  height: 15px;
  background: #555;
  transform: skewX(-20deg);
}
.ltab.active {
  background: #000;
  color: #fff;
  margin-left: 2px;
  padding: 0 8px;
  clip-path: polygon(0 0, 100% 0, calc(100% - 6px) 100%, 6px 100%);
}
.ltab.active::after {
  display: none;
}
.ltab:nth-of-type(4) {
  margin-left: 2px;
}
.scrollleft {
  position: absolute;
  right: 38px;
  top: 4px;
  border: 4px solid transparent;
  border-right: 5px solid #333;
  border-left: 0;
}
.mark {
  position: absolute;
  left: 706px;
  top: 527px;
  width: 180px;
  height: 85px;
  display: flex;
  align-items: center;
  padding-left: 14px;
  box-sizing: border-box;
  gap: 10px;
  background: #1f3159;
}
.marktxt {
  color: #c8cbd3;
}
.m1 {
  font-size: 25px;
  line-height: 28px;
  font-weight: 700;
  letter-spacing: 1.5px;
  white-space: nowrap;
}
.m2 {
  font-family: "Liberation Sans", sans-serif;
  font-size: 10px;
  line-height: 13px;
  letter-spacing: 1.6px;
  color: #b3b8c4;
  white-space: nowrap;
}
</style>

<style>
html,
body {
  margin: 0;
  overflow: hidden;
}
</style>
